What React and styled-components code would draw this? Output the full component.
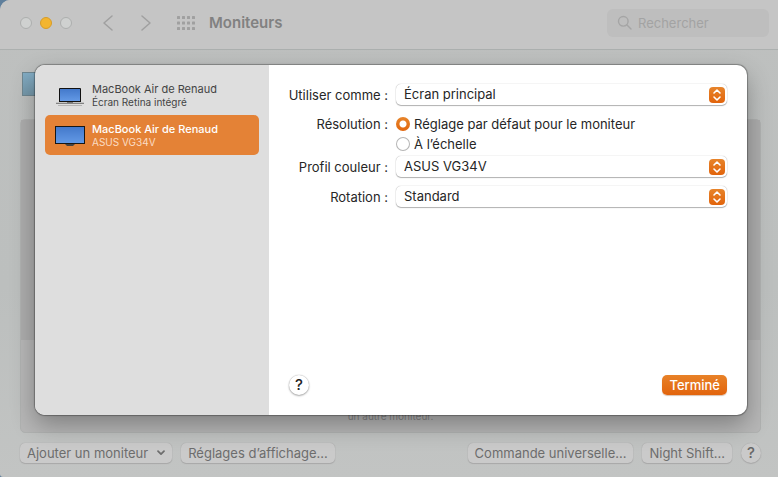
import React, { useState } from "react";
import styled, { createGlobalStyle, css } from "styled-components";

const GlobalStyle = createGlobalStyle`
  *, *::before, *::after { box-sizing: border-box; }
  html, body { margin: 0; }
  body {
    background: #5f7f9c;
    color: #262626;
    font: 13px/20px Inter, "Liberation Sans", sans-serif;
  }
  button, input, select { font: inherit; color: inherit; margin: 0; }
`;

const Window = styled.div`
  position: relative;
  display: flex;
  flex-direction: column;
  min-height: 100vh;
  overflow: hidden;
  border-radius: 10px 0 0 3px;
  background: linear-gradient(#bec0bf, #bcbfbe 60%, #c2c4c3);
`;

const Toolbar = styled.header`
  display: flex;
  align-items: center;
  height: 50px;
  padding: 0 9px 4px 20px;
  border-bottom: 1px solid #acb0af;
  background: #c5c5c5;
`;

const Lights = styled.div`
  display: flex;
  gap: 8px;
  margin-right: 29px;
`;

const Light = styled.button`
  width: 12px;
  height: 12px;
  padding: 0;
  border: 1px solid ${(p) => (p.$active ? "#d79c28" : "#adafae")};
  border-radius: 50%;
  background: ${(p) => (p.$active ? "#f3b52f" : "#cfd1d0")};
`;

const NavButtons = styled.div`
  display: flex;
  gap: 24px;
`;

const ToolButton = styled.button`
  display: flex;
  align-items: center;
  justify-content: center;
  width: ${(p) => p.$width}px;
  height: 24px;
  padding: 0;
  border: 0;
  background: none;
  color: #a0a0a0;
`;

const Title = styled.h1`
  flex: 1;
  margin: 0 0 0 14px;
  color: #818181;
  font-size: 15px;
  font-weight: 600;
  line-height: 20px;
`;

const Search = styled.label`
  display: flex;
  align-items: center;
  gap: 6px;
  width: 162px;
  height: 28px;
  padding: 0 10px;
  border-radius: 6px;
  background: #bebebe;
  color: #a5a5a5;
`;

const SearchInput = styled.input`
  flex: 1;
  min-width: 0;
  padding: 0;
  border: 0;
  outline: 0;
  background: none;
  &::placeholder { color: #a3a3a3; opacity: 1; }
`;

const Content = styled.main`
  display: flex;
  flex: 1;
  flex-direction: column;
  padding: 22px 17px 14px 20px;
`;

const Thumbnail = styled.div`
  width: 48px;
  height: 24px;
  margin: 0 2px 23px;
  border: 1px solid #6f8791;
  background: linear-gradient(#82acc4, #7598aa);
`;

const Panel = styled.section`
  display: flex;
  flex: 1;
  flex-direction: column;
  margin-bottom: 10px;
  border: 1px solid #b0b2b1;
  border-radius: 5px;
  background: #b7b7b7;
`;

const Arrangement = styled.div`
  flex: 1;
  background: #adadad;
`;

const Hint = styled.p`
  margin: 0;
  padding: 69px 0 9px;
  color: #858585;
  font-size: 10px;
  line-height: 14px;
  text-align: center;
`;

const Footer = styled.footer`
  display: flex;
  gap: 9px;
`;

const Spacer = styled.span`
  flex: 1;
`;

const FooterButton = styled.button`
  display: flex;
  align-items: center;
  justify-content: center;
  gap: 9px;
  height: 20px;
  padding: 0 7px;
  border: 0;
  border-radius: 5px;
  background: #cacaca;
  box-shadow: 0 0 1px #999, 0 1px 1px #aaa;
  color: #6d6d6d;
  line-height: 18px;
  white-space: nowrap;
`;

const HelpButton = styled.button`
  width: 20px;
  height: 20px;
  padding: 0;
  border: 0;
  border-radius: 50%;
  font-size: 15px;
  font-weight: 500;
  line-height: 20px;
  ${(p) =>
    p.$dimmed
      ? css`
          background: #cacaca;
          box-shadow: 0 0 1px #999, 0 1px 1px #aaa;
          color: #666;
        `
      : css`
          background: #fff;
          box-shadow: 0 0 1px #999, 0 1px 2px #aaa;
          color: #222;
        `}
`;

const SheetFrame = styled.div`
  position: absolute;
  inset: 65px 31px 62px 35px;
  display: flex;
  border-radius: 10px;
  background: #fff;
  box-shadow: 0 0 1px 1px rgba(0, 0, 0, 0.3), 0 10px 24px rgba(0, 0, 0, 0.3);
`;

const Sidebar = styled.nav`
  flex: none;
  width: 234px;
  padding: 10px;
  border-radius: 10px 0 0 10px;
  background: #dedede;
`;

const Device = styled.button`
  display: flex;
  align-items: center;
  gap: 7px;
  width: 100%;
  height: 40px;
  padding: 1px 10px 0;
  border: 0;
  border-radius: 5px;
  background: ${(p) => (p.$selected ? "#e48236" : "none")};
  color: ${(p) => (p.$selected ? "#fff" : "#444")};
  text-align: left;
`;

const DeviceText = styled.span`
  display: flex;
  flex-direction: column;
`;

const DeviceName = styled.span`
  font-size: 11px;
  font-weight: ${(p) => (p.$selected ? 500 : 400)};
  line-height: 13px;
`;

const DeviceDetail = styled.span`
  color: ${(p) => (p.$selected ? "#fbdcc3" : "#444")};
  font-size: 10px;
  line-height: 13px;
`;

const Pane = styled.section`
  display: flex;
  flex: 1;
  flex-direction: column;
  justify-content: space-between;
  min-width: 0;
  padding: 19px 20px 20px;
`;

const Form = styled.form`
  display: grid;
  grid-template-columns: 99px 1fr;
  grid-template-rows: 30px 42px 30px 22px;
  column-gap: 8px;
  align-items: start;
`;

const Label = styled.label`
  justify-self: end;
  line-height: ${(p) => (p.$group ? 20 : 22)}px;
  white-space: nowrap;
`;

const SelectBox = styled.span`
  position: relative;
  display: block;
`;

const Select = styled.select`
  display: block;
  appearance: none;
  width: 100%;
  height: 21px;
  padding: 0 24px 1px 8px;
  border: 0;
  border-radius: 5px;
  background: #fff;
  box-shadow: 0 0 1px #999, 0 1px 1px #b4b4b4;
  line-height: 20px;
`;

const Stepper = styled.svg`
  position: absolute;
  top: 3px;
  right: 2px;
  pointer-events: none;
`;

const RadioLabel = styled.label`
  display: flex;
  align-items: center;
  gap: 4px;
  height: 20px;
  white-space: nowrap;
`;

const Radio = styled.input`
  appearance: none;
  width: 14px;
  height: 14px;
  border-radius: 50%;
  background: #fff;
  box-shadow: inset 0 0 0 1px #b5b5b5;
  &:checked {
    background: radial-gradient(circle, #fff 0 3px, transparent 4px),
      linear-gradient(#e7852b, #e2660d);
    box-shadow: none;
  }
`;

const Actions = styled.div`
  display: flex;
  align-items: center;
  justify-content: space-between;
`;

const DoneButton = styled.button`
  height: 20px;
  padding: 0 7px;
  border: 0;
  border-radius: 5px;
  background: linear-gradient(#e88228, #e2640c);
  box-shadow: 0 1px 1px #d9c1b0;
  color: #fff;
  font-weight: 500;
  line-height: 18px;
`;

function Chevron({ back }) {
  return (
    <svg width="10" height="16" viewBox="0 0 10 16" fill="none" stroke="currentColor" strokeWidth="1.5" strokeLinecap="round" strokeLinejoin="round">
      <path d={back ? "M9 1 1 8l8 7" : "m1 1 8 7-8 7"} />
    </svg>
  );
}

function GridIcon() {
  return (
    <svg width="18" height="14" viewBox="0 0 18 14" fill="currentColor">
      {[0, 5, 10, 15].flatMap((x) =>
        [0, 5.5, 11].map((y) => <rect key={`${x}-${y}`} x={x} y={y} width="3" height="3" rx="0.6" />)
      )}
    </svg>
  );
}

function ScreenIcon({ laptop }) {
  return (
    <svg width="30" height="22" viewBox="0 0 30 22">
      <defs>
        <linearGradient id="screen" x1="0" y1="0" x2="0" y2="1">
          <stop stopColor="#4379cb" />
          <stop offset="1" stopColor="#6399e5" />
        </linearGradient>
      </defs>
      {laptop ? (
        <>
          <path d="M4 17V4q0-1 1-1h20q1 0 1 1v13Z" fill="#111" />
          <path d="M5 4h20v12H5Z" fill="url(#screen)" />
          <path d="M1 17h28v1H1Z" fill="#c4c4c4" />
          <path d="M1 18h28v1H1Z" fill="#838383" />
          <path d="M12 17h6v1h-6Z" fill="#777" />
          <path d="M3 20h24v1H3Z" fill="#b5b5b5" />
        </>
      ) : (
        <>
          <path d="M10 19h10l-2 2h-6Z" fill="#444" />
          <rect y="1" width="30" height="18" fill="#171717" />
          <rect x="1" y="2" width="28" height="16" fill="url(#screen)" />
        </>
      )}
    </svg>
  );
}

function PopUp({ id, options }) {
  return (
    <SelectBox>
      <Select id={id}>
        {options.map((o) => <option key={o}>{o}</option>)}
      </Select>
      <Stepper width="16" height="16" viewBox="0 0 16 16" fill="none" stroke="#fff" strokeWidth="1.6" strokeLinecap="round" strokeLinejoin="round">
        <defs>
          <linearGradient id={`${id}-fill`} x1="0" y1="0" x2="0" y2="1">
            <stop stopColor="#e7842b" />
            <stop offset="1" stopColor="#e2640c" />
          </linearGradient>
        </defs>
        <rect width="16" height="16" rx="4" stroke="none" fill={`url(#${id}-fill)`} />
        <path d="m5 6 3-3 3 3M5 10l3 3 3-3" />
      </Stepper>
    </SelectBox>
  );
}

const devices = [
  { detail: "Écran Retina intégré", laptop: true },
  { detail: "ASUS VG34V", laptop: false },
];

export default function App() {
  const [selected, setSelected] = useState(1);
  return (
    <>
      <GlobalStyle />
      <Window>
        <Toolbar>
          <Lights>
            <Light aria-label="Fermer" />
            <Light $active aria-label="Réduire" />
            <Light aria-label="Agrandir" />
          </Lights>
          <NavButtons>
            <ToolButton $width={14} aria-label="Précédent"><Chevron back /></ToolButton>
            <ToolButton $width={14} aria-label="Suivant"><Chevron /></ToolButton>
            <ToolButton $width={18} aria-label="Tout afficher"><GridIcon /></ToolButton>
          </NavButtons>
          <Title>Moniteurs</Title>
          <Search>
            <svg width="15" height="15" viewBox="0 0 15 15" fill="none" stroke="currentColor" strokeWidth="1.4" strokeLinecap="round">
              <circle cx="6.3" cy="6.3" r="4.8" />
              <path d="m10 10 4 4" />
            </svg>
            <SearchInput type="search" placeholder="Rechercher" aria-label="Rechercher" />
          </Search>
        </Toolbar>
        <Content>
          <Thumbnail />
          <Panel>
            <Arrangement />
            <Hint>un autre moniteur.</Hint>
          </Panel>
          <Footer>
            <FooterButton>
              Ajouter un moniteur
              <svg width="8" height="6" viewBox="0 0 8 6" fill="none" stroke="currentColor" strokeWidth="1.7" strokeLinecap="round" strokeLinejoin="round">
                <path d="m1 1.2 3 3 3-3" />
              </svg>
            </FooterButton>
            <FooterButton>Réglages d’affichage...</FooterButton>
            <Spacer />
            <FooterButton>Commande universelle...</FooterButton>
            <FooterButton>Night Shift...</FooterButton>
            <HelpButton $dimmed aria-label="Aide">?</HelpButton>
          </Footer>
        </Content>
        <SheetFrame role="dialog" aria-label="Réglages d’affichage">
          <Sidebar>
            {devices.map((d, i) => (
              <Device key={d.detail} $selected={selected === i} onClick={() => setSelected(i)}>
                <ScreenIcon laptop={d.laptop} />
                <DeviceText>
                  <DeviceName $selected={selected === i}>MacBook Air de Renaud</DeviceName>
                  <DeviceDetail $selected={selected === i}>{d.detail}</DeviceDetail>
                </DeviceText>
              </Device>
            ))}
          </Sidebar>
          <Pane>
            <Form>
              <Label htmlFor="use">Utiliser comme :</Label>
              <PopUp id="use" options={["Écran principal"]} />
              <Label as="span" $group id="resolution">Résolution :</Label>
              <div role="radiogroup" aria-labelledby="resolution">
                <RadioLabel>
                  <Radio type="radio" name="resolution" defaultChecked />
                  Réglage par défaut pour le moniteur
                </RadioLabel>
                <RadioLabel>
                  <Radio type="radio" name="resolution" />
                  À l’échelle
                </RadioLabel>
              </div>
              <Label htmlFor="profile">Profil couleur :</Label>
              <PopUp id="profile" options={["ASUS VG34V"]} />
              <Label htmlFor="rotation">Rotation :</Label>
              <PopUp id="rotation" options={["Standard"]} />
            </Form>
            <Actions>
              <HelpButton aria-label="Aide">?</HelpButton>
              <DoneButton>Terminé</DoneButton>
            </Actions>
          </Pane>
        </SheetFrame>
      </Window>
    </>
  );
}
